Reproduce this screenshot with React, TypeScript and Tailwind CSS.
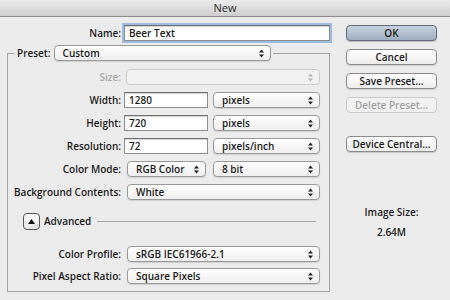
import React from "react";

function Arrows({ disabled = false }: { disabled?: boolean }) {
  const c = disabled ? "#b5b5b5" : "#222";
  return (
    <svg width="5" height="9" viewBox="0 0 5 9" className="shrink-0">
      <path d="M2.5 0.5 L5 3.5 L0 3.5 Z" fill={c} />
      <path d="M0 5.5 L5 5.5 L2.5 8.5 Z" fill={c} />
    </svg>
  );
}

function Select({ value, className = "", disabled = false }: { value?: string; className?: string; disabled?: boolean }) {
  return (
    <div
      className={`h-[16px] rounded-[4px] border flex items-center justify-between pl-[8px] pr-[6px] ${
        disabled
          ? "border-[#cdcdcd] bg-[#f2f2f2] text-[#a8a8a8]"
          : "border-[#9a9a9a] bg-gradient-to-b from-white to-[#efefef] shadow-[0_1px_1px_rgba(0,0,0,0.12)]"
      } ${className}`}
    >
      <span className="whitespace-nowrap leading-[14px]">{value}</span>
      <Arrows disabled={disabled} />
    </div>
  );
}

function Input({ value, className = "" }: { value: string; className?: string }) {
  return (
    <div className={`h-[16px] bg-white border border-[#8e8e8e] border-t-[#6f6f6f] shadow-[inset_0_1px_1px_rgba(0,0,0,0.18)] pl-[4px] flex items-center leading-[14px] ${className}`}>
      {value}
    </div>
  );
}

function Button({ children, primary = false, disabled = false, className = "" }: { children: React.ReactNode; primary?: boolean; disabled?: boolean; className?: string }) {
  let look = "border-[#8c8c8c] bg-gradient-to-b from-white to-[#ededed] shadow-[0_1px_1px_rgba(0,0,0,0.15)]";
  if (primary) look = "border-[#5f6b7b] bg-gradient-to-b from-[#c9d3df] to-[#9eadc0] shadow-[0_1px_1px_rgba(0,0,0,0.2)]";
  if (disabled) look = "border-[#cbcbcb] bg-[#f1f1f1] text-[#a3a3a3]";
  return (
    <div className={`h-[16px] w-[91px] rounded-[4px] border flex items-center justify-center leading-[14px] whitespace-nowrap ${look} ${className}`}>
      {children}
    </div>
  );
}

function Row({ label, children, dim = false }: { label: string; children: React.ReactNode; dim?: boolean }) {
  return (
    <div className="flex h-[16px] items-center">
      <span className={`w-[113px] text-right shrink-0 ${dim ? "text-[#a9a9a9]" : ""}`}>{label}</span>
      {children}
    </div>
  );
}

export default function App() {
  return (
    <div className="w-[450px] h-[300px] overflow-hidden bg-[#ececec] text-[#1b1b1b] text-[10px] font-semibold font-['Open_Sans',sans-serif]">
      <div className="h-[17px] border-b border-[#8d8d8d] bg-gradient-to-b from-[#ebebeb] to-[#cfcfcf] flex items-center justify-center font-normal text-[11px] text-[#2a2a2a]">
        New
      </div>

      <div className="flex pt-[8px]">
        <div className="w-[330px] shrink-0">
          <div className="flex h-[16px] items-center">
            <span className="w-[121px] text-right">Name:</span>
            <Input value="Beer Text" className="ml-[3px] w-[206px] border-[#6b8fbd] border-t-[#6b8fbd] ring-2 ring-[#9ebbe0]" />
          </div>

          <fieldset className="ml-[7px] mt-[4px] w-[323px] border border-[#a3a3a3] pt-[8px] pb-[7px]">
            <legend className="ml-[6px] pl-[3px] pr-[2px]">
              <div className="flex items-center h-[16px]">
                <span>Preset:</span>
                <Select value="Custom" className="ml-[3px] w-[217px]" />
              </div>
            </legend>

            <div className="flex flex-col gap-[7px]">
              <Row label="Size:" dim>
                <Select disabled className="ml-[5px] w-[194px]" />
              </Row>
              <Row label="Width:">
                <Input value="1280" className="ml-[3px] w-[84px]" />
                <Select value="pixels" className="ml-[5px] w-[107px]" />
              </Row>
              <Row label="Height:">
                <Input value="720" className="ml-[3px] w-[84px]" />
                <Select value="pixels" className="ml-[5px] w-[107px]" />
              </Row>
              <Row label="Resolution:">
                <Input value="72" className="ml-[3px] w-[84px]" />
                <Select value="pixels/inch" className="ml-[5px] w-[107px]" />
              </Row>
              <Row label="Color Mode:">
                <Select value="RGB Color" className="ml-[6px] w-[79px]" />
                <Select value="8 bit" className="ml-[7px] w-[107px]" />
              </Row>
              <Row label="Background Contents:">
                <Select value="White" className="ml-[6px] w-[193px]" />
              </Row>
            </div>

            <div className="flex items-center h-[17px] mt-[13px] pl-[15px] pr-[13px]">
              <div className="w-[17px] h-[17px] rounded-[4px] border border-[#555] bg-gradient-to-b from-white to-[#e4e4e4] flex items-center justify-center">
                <svg width="7" height="5" viewBox="0 0 7 5">
                  <path d="M3.5 0 L7 5 L0 5 Z" fill="#111" />
                </svg>
              </div>
              <span className="ml-[4px]">Advanced</span>
              <div className="flex-1 ml-[6px] h-px bg-[#a6a6a6]" />
            </div>

            <div className="flex flex-col gap-[6px] mt-[16px]">
              <Row label="Color Profile:">
                <Select value="sRGB IEC61966-2.1" className="ml-[6px] w-[193px]" />
              </Row>
              <Row label="Pixel Aspect Ratio:">
                <Select value="Square Pixels" className="ml-[6px] w-[193px]" />
              </Row>
            </div>
          </fieldset>
        </div>

        <div className="ml-[16px] w-[91px] flex flex-col">
          <div className="flex flex-col gap-[8px]">
            <Button primary>OK</Button>
            <Button>Cancel</Button>
            <Button>Save Preset...</Button>
            <Button disabled>Delete Preset...</Button>
          </div>
          <Button className="mt-[23px]">Device Central...</Button>
          <div className="mt-[53px] text-center leading-[14px]">Image Size:</div>
          <div className="mt-[6px] text-center leading-[14px]">2.64M</div>
        </div>
      </div>
    </div>
  );
}
